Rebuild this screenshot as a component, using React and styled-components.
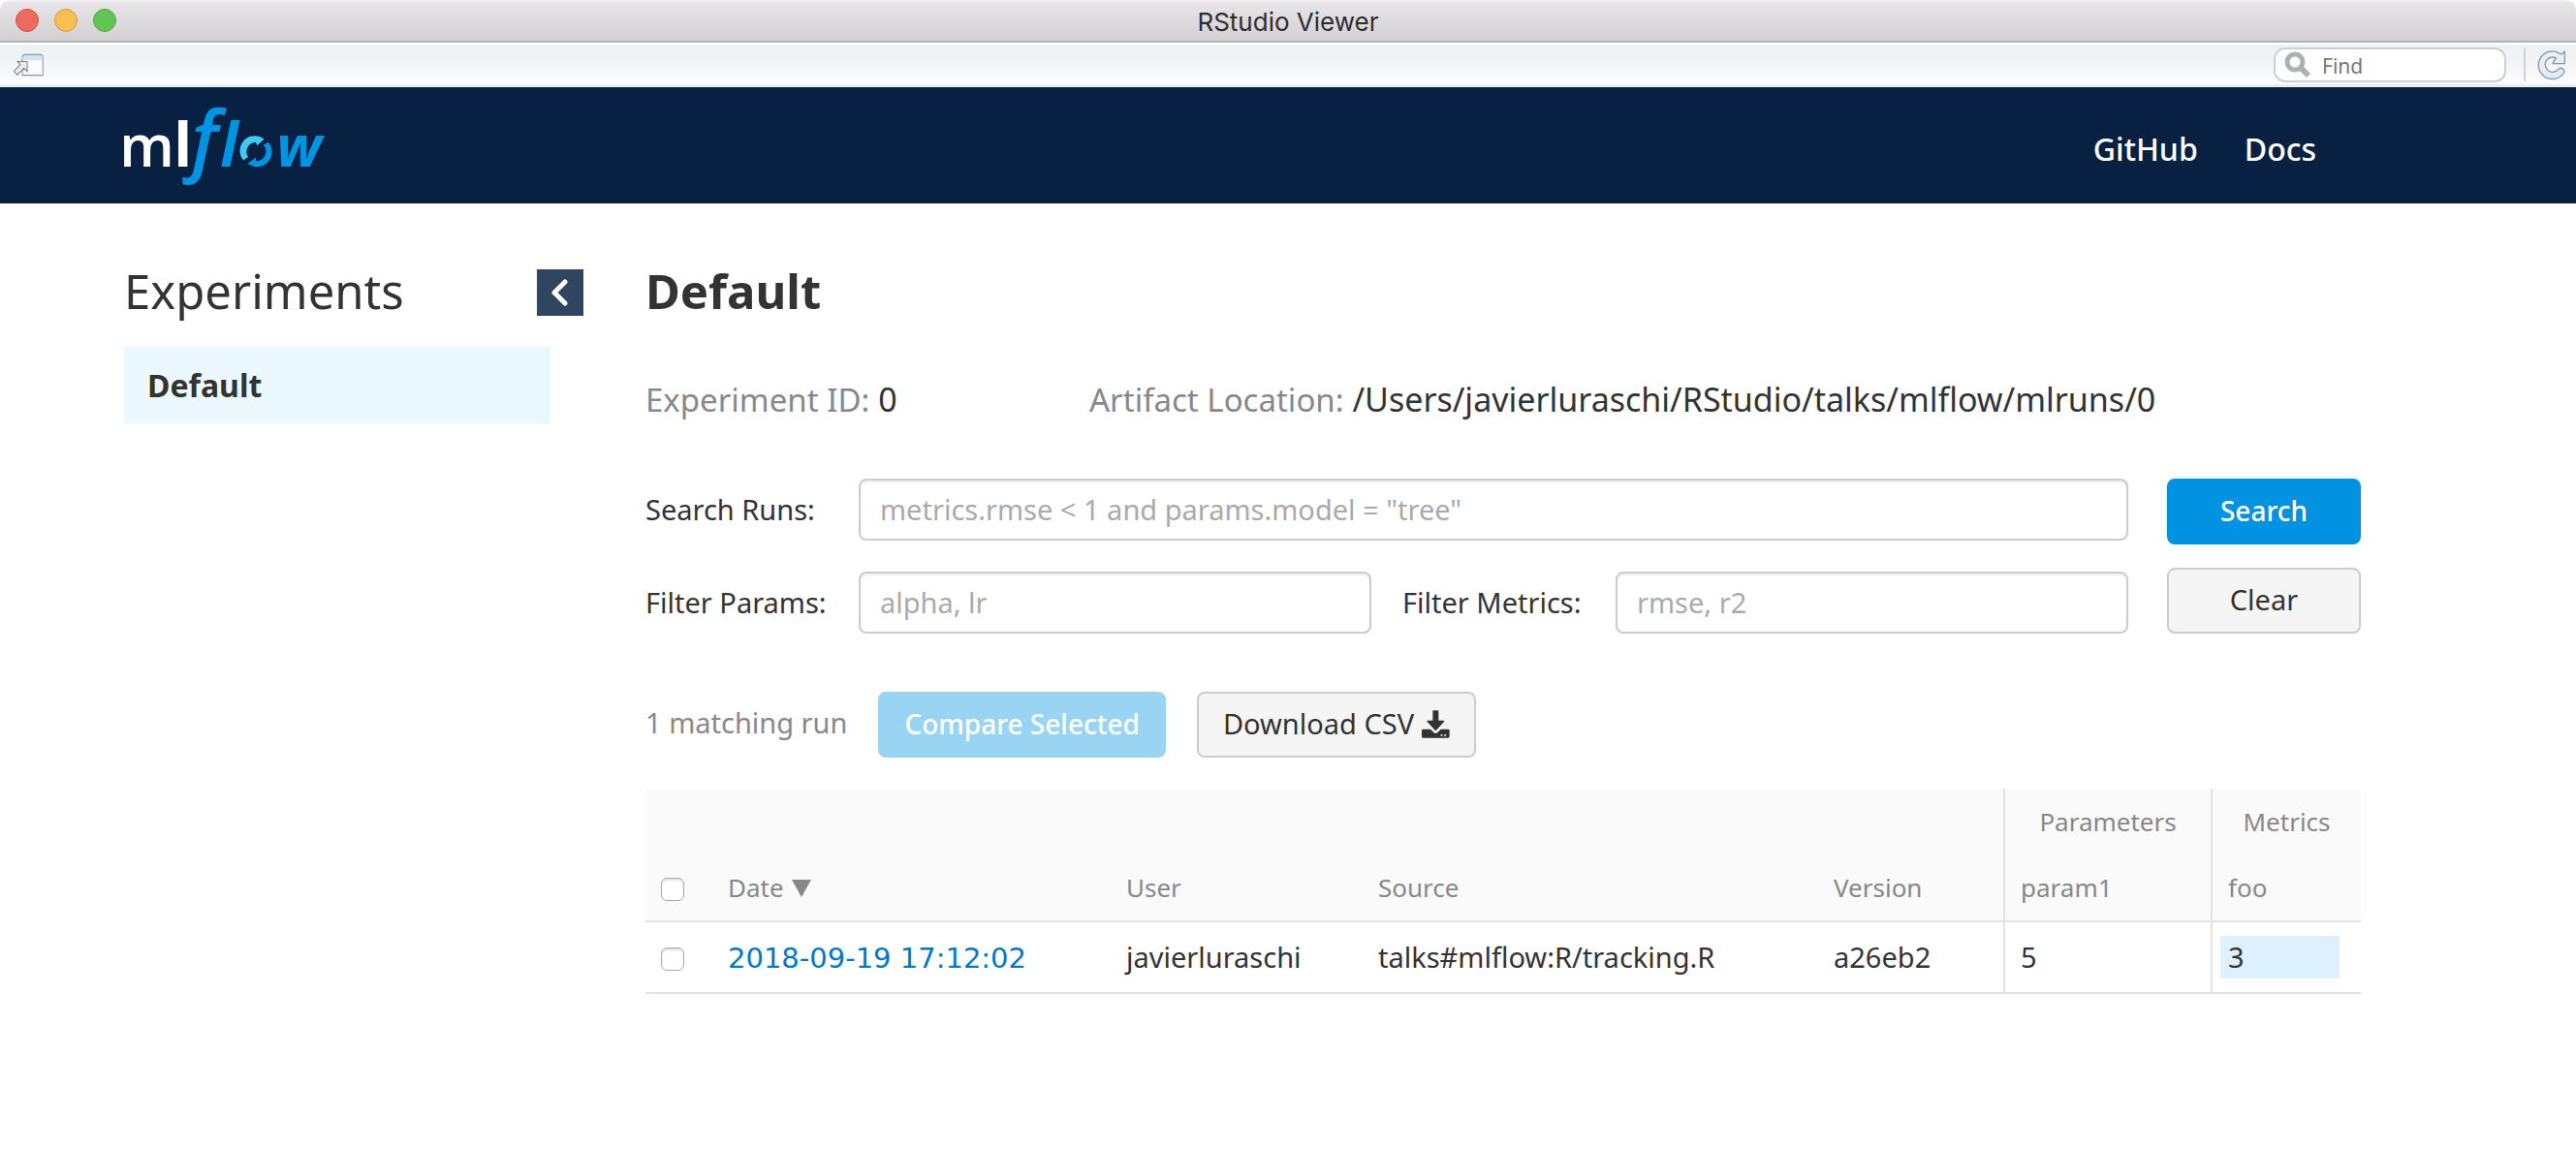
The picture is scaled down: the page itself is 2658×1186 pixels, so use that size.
import React from "react";
import styled, { createGlobalStyle } from "styled-components";

const GlobalStyle = createGlobalStyle`
  *, *::before, *::after { box-sizing: border-box; }
  body {
    margin: 0;
    background: #fff;
    color: #333;
    font-family: "Noto Sans", "Open Sans", sans-serif;
    font-size: 29px;
    line-height: 44px;
  }
  h1, h2, ul, form { margin: 0; padding: 0; }
  button, input { font: inherit; color: inherit; }
`;

/* ---------- window chrome ---------- */

const TitleBar = styled.div`
  display: grid;
  grid-template-columns: 1fr auto 1fr;
  align-items: center;
  height: 44px;
  padding: 0 16px;
  border-radius: 10px 10px 0 0;
  border-bottom: 2px solid #b3b1b3;
  background: linear-gradient(#f4f3f5 0, #e7e5e8 3px, #d2d0d3 100%);
`;

const Lights = styled.div`
  display: flex;
  gap: 16px;
`;

const Light = styled.button`
  width: 24px;
  height: 24px;
  padding: 0;
  border: 1px solid ${(p) => p.$edge};
  border-radius: 50%;
  background: ${(p) => p.$fill};
`;

const WindowTitle = styled.div`
  padding-top: 3px;
  font: 400 26px/38px Inter, Roboto, sans-serif;
  color: #2e2d2e;
`;

const Toolbar = styled.div`
  display: flex;
  align-items: center;
  justify-content: space-between;
  height: 46px;
  padding: 0 10px 0 14px;
  border-top: 2px solid #fcfdfd;
  border-bottom: 3px solid #e8eded;
  background: linear-gradient(#edf2f2, #f2f4f6 45%, #fcfcfc);
`;

const IconButton = styled.button`
  display: flex;
  padding: 0;
  border: 0;
  background: none;
`;

const ToolbarEnd = styled.div`
  display: flex;
  align-items: center;
`;

const FindBox = styled.label`
  display: flex;
  align-items: center;
  gap: 11px;
  width: 240px;
  height: 36px;
  padding: 0 9px;
  border: 2px solid #cbd0d4;
  border-radius: 12px;
  background: #fff;
`;

const FindInput = styled.input`
  flex: 1;
  min-width: 0;
  padding: 2px 0 0;
  border: 0;
  outline: 0;
  background: none;
  font-size: 21px;
  line-height: 28px;
  &::placeholder { color: #777; opacity: 1; }
`;

const Divider = styled.span`
  width: 2px;
  height: 34px;
  margin: 0 12px 0 18px;
  background: #d0d3d4;
`;

/* ---------- page header ---------- */

const Header = styled.header`
  display: flex;
  align-items: center;
  justify-content: space-between;
  height: 120px;
  padding: 0 268px 0 128px;
  background: #082142;
`;

const HomeLink = styled.a`
  display: flex;
`;

const LogoDrawing = styled.svg`
  overflow: visible;
`;

const Nav = styled.nav`
  display: flex;
  gap: 48px;
`;

const NavLink = styled.a`
  padding-top: 8px;
  color: #fff;
  font-size: 32px;
  font-weight: 500;
  text-decoration: none;
`;

/* ---------- page body ---------- */

const Page = styled.div`
  display: grid;
  grid-template-columns: 474px minmax(0, 1fr);
  column-gap: 64px;
  padding: 60px 222px 0 128px;
`;

const SidebarHead = styled.div`
  display: flex;
  justify-content: space-between;
  margin-bottom: 28px;
`;

const Heading = styled.h1`
  font-size: 49px;
  line-height: 60px;
  font-weight: ${(p) => (p.$strong ? 700 : 400)};
`;

const CollapseButton = styled.button`
  display: flex;
  align-items: center;
  justify-content: center;
  width: 48px;
  height: 48px;
  margin-top: 8px;
  padding: 0;
  border: 0;
  background: #2f4560;
`;

const ExperimentList = styled.ul`
  margin-right: 34px;
  list-style: none;
`;

const ExperimentLink = styled.a`
  display: block;
  padding: 18px 24px;
  background: #ebf9ff;
  color: #333;
  font-size: 32px;
  font-weight: 700;
  text-decoration: none;
`;

const Meta = styled.div`
  display: flex;
  margin: 60px 0 59px;
  font-size: 34px;
`;

const MetaItem = styled.div`
  min-width: ${(p) => (p.$wide ? "auto" : "458px")};
`;

const MetaLabel = styled.span`
  color: #888;
  font-size: 33px;
`;

const SearchForm = styled.form`
  display: flex;
  gap: 40px;
`;

const Fields = styled.div`
  flex: 1;
  display: grid;
  grid-template-columns: 220px 1fr 252px 1fr;
  row-gap: 32px;
  align-items: center;
`;

const FieldLabel = styled.label`
  padding-left: ${(p) => (p.$inset ? "32px" : 0)};
`;

const TextField = styled.input`
  grid-column: ${(p) => (p.$full ? "2 / -1" : "auto")};
  width: 100%;
  height: 64px;
  padding: 0 20px 2px;
  border: 2px solid #ccc;
  border-radius: 8px;
  box-shadow: inset 0 2px 2px rgba(0, 0, 0, 0.075);
  &::placeholder { color: #aaa; opacity: 1; }
`;

const FormButtons = styled.div`
  display: flex;
  flex-direction: column;
  gap: 24px;
  width: 200px;
`;

const Button = styled.button`
  display: flex;
  align-items: center;
  justify-content: center;
  gap: 8px;
  height: 68px;
  padding: 0 25px 2px;
  border: 2px solid ${(p) => (p.$primary ? "#0193e1" : "#ccc")};
  border-radius: 8px;
  background: ${(p) => (p.$primary ? "#0193e1" : "#f5f5f5")};
  color: ${(p) => (p.$primary ? "#fff" : "#333")};
  font-size: ${(p) => (p.$primary ? 28 : 29)}px;
  font-weight: ${(p) => (p.$primary ? 500 : 400)};
  &:disabled {
    border-color: #99d4f3;
    background: #99d4f3;
  }
`;

const Actions = styled.div`
  display: flex;
  align-items: center;
  gap: 32px;
  margin: 60px 0 32px;
`;

const RunCount = styled.span`
  padding-bottom: 4px;
  color: #888;
`;

/* ---------- runs table ---------- */

const Table = styled.table`
  width: 100%;
  table-layout: fixed;
  border-collapse: separate;
  border-spacing: 0;
`;

const Col = styled.col`
  width: ${(p) => p.$w}px;
`;

const Th = styled.th`
  height: ${(p) => (p.$group ? 68 : 70)}px;
  padding: 0 16px;
  border-bottom: ${(p) => (p.$group ? 0 : "2px solid #e2e2e2")};
  border-left: ${(p) => (p.$ruled ? "2px solid #e2e2e2" : 0)};
  background: #fafafa;
  color: #888;
  font-size: 26px;
  font-weight: 400;
  text-align: ${(p) => (p.$group ? "center" : "left")};
  white-space: nowrap;
`;

const Td = styled.td`
  height: 74px;
  padding: 0 16px;
  border-bottom: 2px solid #e2e2e2;
  border-left: ${(p) => (p.$ruled ? "2px solid #e2e2e2" : 0)};
  white-space: nowrap;
`;

const Checkbox = styled.input.attrs({ type: "checkbox" })`
  appearance: none;
  display: block;
  width: 24px;
  height: 24px;
  margin: 4px 0 0;
  border: 1px solid #aaa;
  border-radius: 6px;
  background: #fff;
  box-shadow: inset 0 2px 2px rgba(0, 0, 0, 0.12);
  &:checked { background: #0193e1; }
`;

const SortArrow = styled.svg`
  margin-left: 8px;
`;

const RunLink = styled.a`
  color: #0079c7;
  font-family: "DejaVu Sans", "Noto Sans", sans-serif;
  text-decoration: none;
`;

const MetricValue = styled.div`
  margin: 0 6px 0 -8px;
  padding-left: 8px;
  background: #ddf0fe;
`;

/* ---------- drawings ---------- */

const PopOutIcon = () => (
  <svg width="32" height="24" viewBox="45 169 93 70" aria-hidden="true">
    <path d="M71 235V182q0-9 9-9H124q9 0 9 9V235Z" fill="#fafcff" stroke="#8299a8" strokeWidth="3" />
    <path d="M73 190V183q0-8 8-8H123q8 0 8 8V190Z" fill="#cfe4fb" />
    <path d="M86 194H56L65 203L46 223L56 234L76 214L86 224Z" fill="#e9ebee" stroke="#75818c" strokeWidth="3" strokeLinejoin="round" />
  </svg>
);

const FindIcon = () => (
  <svg width="28" height="28" viewBox="0 0 28 28" aria-hidden="true">
    <circle cx="11" cy="11" r="8" fill="none" stroke="#a9b2b5" strokeWidth="5" />
    <path d="M17 17L25 25" stroke="#a9b2b5" strokeWidth="6" />
  </svg>
);

const RefreshIcon = () => (
  <svg width="30" height="32" viewBox="864 60 90 96" aria-hidden="true">
    <defs>
      <linearGradient id="refresh-fill" x1="0" y1="0" x2="0" y2="1">
        <stop offset="0" stopColor="#eef1f6" />
        <stop offset="1" stopColor="#dbe8fb" />
      </linearGradient>
    </defs>
    <path
      d="M949 66V104H912Q914 96 923 87A23 23 0 1 0 930 121Q936 116 941 119Q949 123 947 132A43 43 0 1 1 936 74Q941 76 949 66Z"
      fill="url(#refresh-fill)"
      stroke="#8a95a8"
      strokeWidth="4"
      strokeLinejoin="round"
    />
  </svg>
);

const Logo = () => (
  <LogoDrawing width="212" height="120" viewBox="384 270 636 360" role="img" aria-label="mlflow">
    <g fontFamily="Open Sans, sans-serif" fontWeight="700">
      <text x="370" y="517" fontSize="178" fontWeight="600" fill="#fff">m</text>
      <text x="538" y="517" fontSize="186" fill="#fff">l</text>
      <text x="592" y="516" fontSize="240" fontWeight="600" fontStyle="italic" fill="#0194e2">f</text>
      <text x="682" y="516" fontSize="186" fontStyle="italic" fill="#0194e2">l</text>
      <text x="856" y="516" fontSize="178" fontStyle="italic" fill="#0194e2">w</text>
    </g>
    <g transform="translate(792 468) scale(.96) translate(-792 -467)">
      <path d="M752 497A48 48 0 0 1 806 421L819 428L796 449L792 438A31 31 0 0 0 767 486Z" fill="#43c9ed" />
      <path d="M832 438A48 48 0 0 1 780 515L765 508L792 487V499A31 31 0 0 0 816 447Z" fill="#0194e2" />
    </g>
  </LogoDrawing>
);

const ChevronLeftIcon = () => (
  <svg width="18" height="28" viewBox="0 0 18 28" fill="none" aria-hidden="true">
    <path d="M14 3L3 14L14 25" stroke="#fff" strokeWidth="5" strokeLinecap="round" strokeLinejoin="round" />
  </svg>
);

const DownloadIcon = () => (
  <svg width="29" height="29" viewBox="798 99 87 87" fill="#333" aria-hidden="true">
    <path d="M835 100h12q3 0 3 3V131H866q4 1 1 4L843 161q-2 2-4 0L815 135q-3-3 1-4H832V103q0-3 3-3Z" />
    <path fillRule="evenodd" d="M802 158H825L836 169q5 4 10 0L857 158H880q4 0 4 4V181q0 4-4 4H802q-4 0-4-4V162q0-4 4-4ZM857 174h5v5h-5ZM868 174h5v5h-5Z" />
  </svg>
);

/* ---------- data ---------- */

const lights = [
  { name: "Close", fill: "#ed6a5f", edge: "#cf5046" },
  { name: "Minimize", fill: "#f6bf50", edge: "#d39f3c" },
  { name: "Zoom", fill: "#62c655", edge: "#4fa73f" },
];

const columnWidths = [69, 411, 260, 470, 191, 214, 155];

const runs = [
  {
    date: "2018-09-19 17:12:02",
    user: "javierluraschi",
    source: "talks#mlflow:R/tracking.R",
    version: "a26eb2",
    param1: "5",
    foo: "3",
  },
];

export default function App() {
  return (
    <>
      <GlobalStyle />
      <TitleBar>
        <Lights>
          {lights.map((l) => (
            <Light key={l.name} type="button" aria-label={l.name} $fill={l.fill} $edge={l.edge} />
          ))}
        </Lights>
        <WindowTitle>RStudio Viewer</WindowTitle>
      </TitleBar>
      <Toolbar>
        <IconButton type="button" aria-label="Show in new window">
          <PopOutIcon />
        </IconButton>
        <ToolbarEnd>
          <FindBox>
            <FindIcon />
            <FindInput type="text" placeholder="Find" aria-label="Find" />
          </FindBox>
          <Divider />
          <IconButton type="button" aria-label="Refresh">
            <RefreshIcon />
          </IconButton>
        </ToolbarEnd>
      </Toolbar>

      <Header>
        <HomeLink href="#home">
          <Logo />
        </HomeLink>
        <Nav>
          <NavLink href="#github">GitHub</NavLink>
          <NavLink href="#docs">Docs</NavLink>
        </Nav>
      </Header>

      <Page>
        <aside>
          <SidebarHead>
            <Heading as="h2">Experiments</Heading>
            <CollapseButton type="button" aria-label="Collapse experiments">
              <ChevronLeftIcon />
            </CollapseButton>
          </SidebarHead>
          <ExperimentList>
            <li>
              <ExperimentLink href="#experiment-0">Default</ExperimentLink>
            </li>
          </ExperimentList>
        </aside>

        <main>
          <Heading $strong>Default</Heading>
          <Meta>
            <MetaItem>
              <MetaLabel>Experiment ID:</MetaLabel> 0
            </MetaItem>
            <MetaItem $wide>
              <MetaLabel>Artifact Location:</MetaLabel> /Users/javierluraschi/RStudio/talks/mlflow/mlruns/0
            </MetaItem>
          </Meta>

          <SearchForm onSubmit={(e) => e.preventDefault()}>
            <Fields>
              <FieldLabel htmlFor="search-runs">Search Runs:</FieldLabel>
              <TextField id="search-runs" type="text" $full placeholder={'metrics.rmse < 1 and params.model = "tree"'} />
              <FieldLabel htmlFor="filter-params">Filter Params:</FieldLabel>
              <TextField id="filter-params" type="text" placeholder="alpha, lr" />
              <FieldLabel htmlFor="filter-metrics" $inset>
                Filter Metrics:
              </FieldLabel>
              <TextField id="filter-metrics" type="text" placeholder="rmse, r2" />
            </Fields>
            <FormButtons>
              <Button type="submit" $primary>
                Search
              </Button>
              <Button type="reset">Clear</Button>
            </FormButtons>
          </SearchForm>

          <Actions>
            <RunCount>1 matching run</RunCount>
            <Button type="button" $primary disabled>
              Compare Selected
            </Button>
            <Button type="button">
              Download CSV
              <DownloadIcon />
            </Button>
          </Actions>

          <Table>
            <colgroup>
              {columnWidths.map((w, i) => (
                <Col key={i} $w={w} />
              ))}
            </colgroup>
            <thead>
              <tr>
                <Th $group colSpan={5} />
                <Th $group $ruled scope="colgroup">Parameters</Th>
                <Th $group $ruled scope="colgroup">Metrics</Th>
              </tr>
              <tr>
                <Th>
                  <Checkbox aria-label="Select all runs" />
                </Th>
                <Th scope="col">
                  Date
                  <SortArrow width="20" height="18" viewBox="0 0 20 18" fill="#888" aria-hidden="true">
                    <path d="M0 0H20L10 18Z" />
                  </SortArrow>
                </Th>
                <Th scope="col">User</Th>
                <Th scope="col">Source</Th>
                <Th scope="col">Version</Th>
                <Th scope="col" $ruled>param1</Th>
                <Th scope="col" $ruled>foo</Th>
              </tr>
            </thead>
            <tbody>
              {runs.map((run) => (
                <tr key={run.date}>
                  <Td>
                    <Checkbox aria-label={`Select run ${run.date}`} />
                  </Td>
                  <Td>
                    <RunLink href="#run">{run.date}</RunLink>
                  </Td>
                  <Td>{run.user}</Td>
                  <Td>{run.source}</Td>
                  <Td>{run.version}</Td>
                  <Td $ruled>{run.param1}</Td>
                  <Td $ruled>
                    <MetricValue>{run.foo}</MetricValue>
                  </Td>
                </tr>
              ))}
            </tbody>
          </Table>
        </main>
      </Page>
    </>
  );
}
